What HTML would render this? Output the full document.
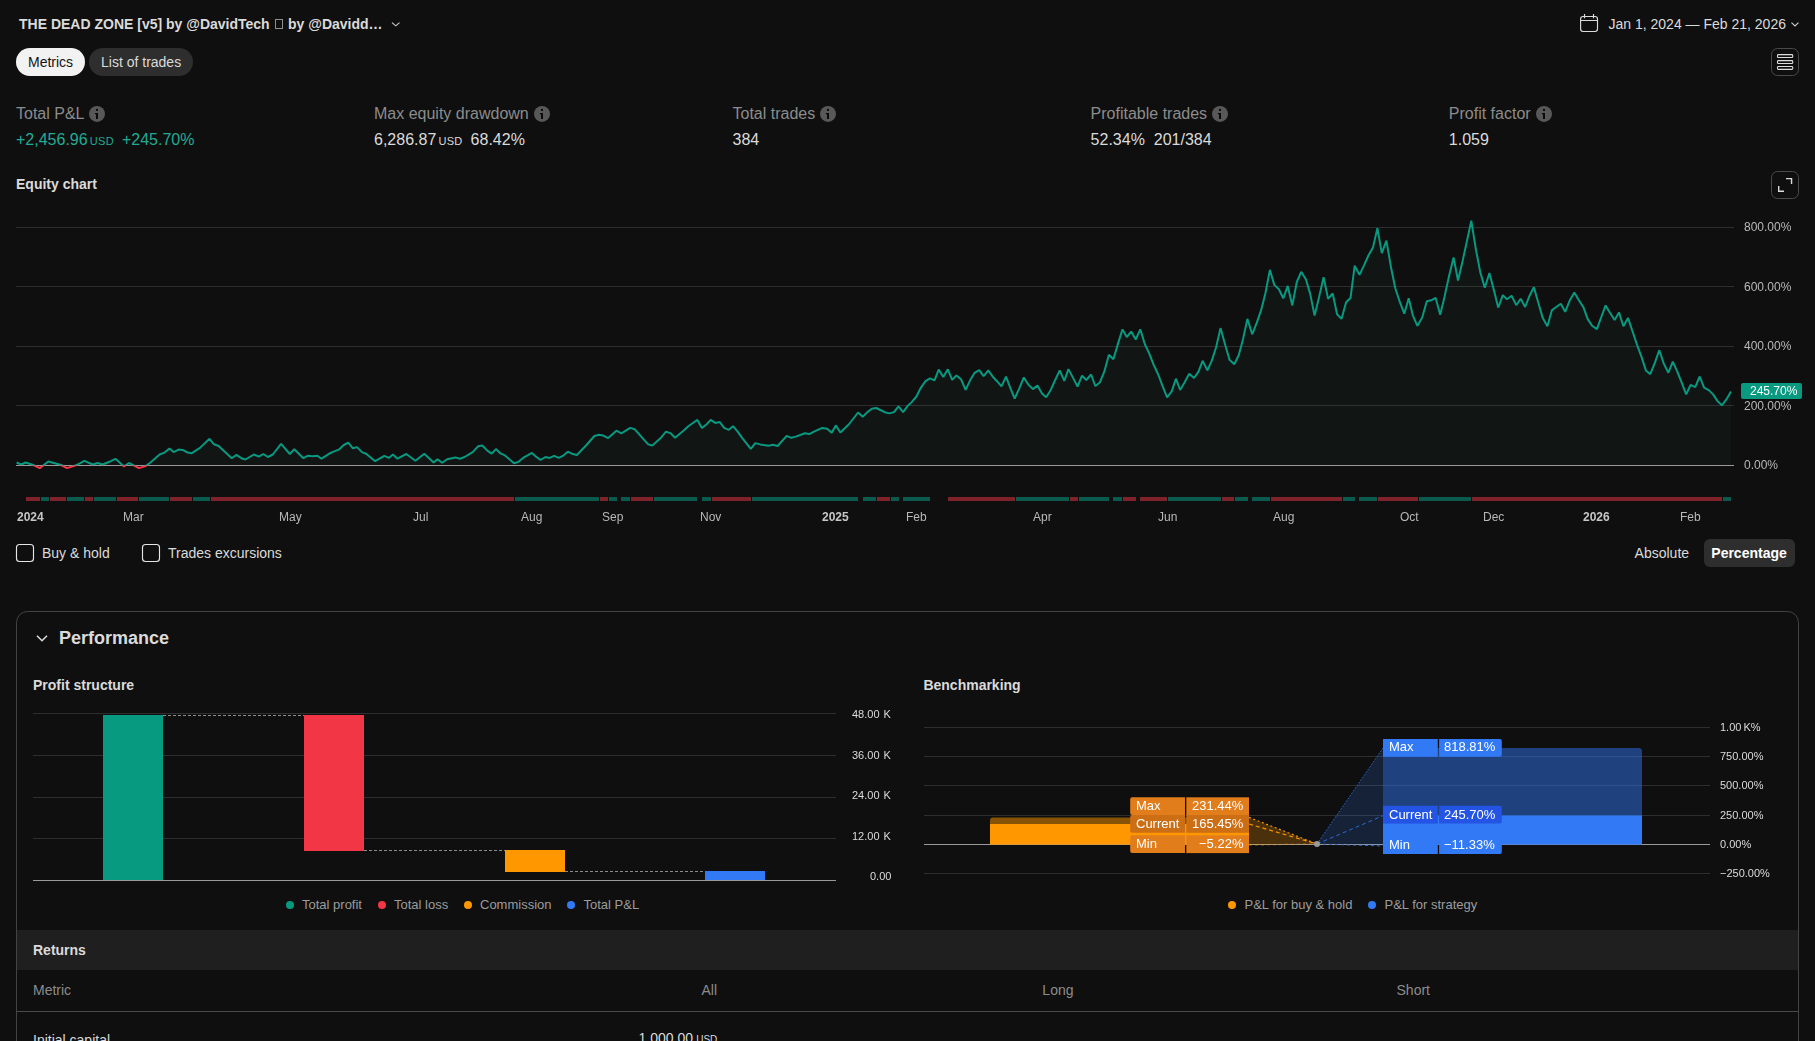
<!DOCTYPE html><html><head><meta charset="utf-8"><title>Strategy report</title>
<style>
html,body{margin:0;padding:0;background:#0f0f0f;}
body{width:1815px;height:1041px;overflow:hidden;position:relative;font-family:"Liberation Sans",sans-serif;color:#dbdbdb;}
.t{position:absolute;white-space:nowrap;}
.abs{position:absolute;}
.g{will-change:transform;}
svg{position:absolute;left:0;top:0;}
.usd{font-size:11px;margin-left:2.2px;letter-spacing:0.3px;margin-right:-0.9px;}
</style></head><body>
<svg width="1815" height="1041" viewBox="0 0 1815 1041">
<defs><clipPath id="up"><rect x="0" y="200" width="1815" height="265.5"/></clipPath><clipPath id="dn"><rect x="0" y="465.5" width="1815" height="40"/></clipPath></defs>
<line x1="16" x2="1734" y1="227.5" y2="227.5" stroke="#2e2e2e" stroke-width="1"/>
<line x1="16" x2="1734" y1="286.5" y2="286.5" stroke="#2e2e2e" stroke-width="1"/>
<line x1="16" x2="1734" y1="346.5" y2="346.5" stroke="#2e2e2e" stroke-width="1"/>
<line x1="16" x2="1734" y1="405.5" y2="405.5" stroke="#2e2e2e" stroke-width="1"/>
<path d="M16.6,462.5 L21.2,464.5 L25.7,462.5 L34.0,465.3 L39.8,468.1 L48.3,461.5 L61.2,465.0 L67.0,468.1 L74.5,465.8 L79.4,463.6 L84.4,460.8 L92.6,464.5 L97.6,463.0 L102.6,464.5 L110.8,461.2 L115.5,458.8 L124.0,466.4 L129.0,463.0 L139.0,468.1 L145.5,466.1 L150.5,462.5 L159.6,454.5 L164.5,452.6 L169.5,448.4 L173.6,452.1 L178.6,449.6 L182.7,449.9 L187.7,452.6 L191.8,453.2 L200.0,447.9 L209.5,438.8 L214.1,444.3 L218.6,446.0 L231.8,458.2 L236.4,454.9 L241.4,458.2 L245.5,459.5 L253.8,454.5 L258.8,456.7 L263.2,454.0 L267.9,457.0 L272.8,454.5 L281.1,443.8 L289.8,454.0 L294.3,449.3 L303.4,458.2 L308.0,455.7 L312.4,456.2 L317.4,455.7 L321.5,458.7 L330.6,452.9 L339.3,449.3 L343.8,445.0 L348.3,442.6 L352.9,448.3 L357.0,447.1 L362.0,452.1 L366.1,453.7 L375.2,461.2 L384.3,455.9 L388.8,457.9 L392.9,454.5 L397.5,458.7 L406.3,454.0 L415.4,460.8 L424.3,453.7 L433.6,462.5 L437.5,459.2 L442.1,462.8 L447.1,459.2 L455.4,457.4 L460.0,458.7 L464.5,457.0 L472.7,452.1 L478.0,446.3 L482.3,445.5 L487.6,450.9 L491.7,453.7 L495.9,449.1 L500.5,453.4 L505.0,455.4 L514.0,463.3 L518.2,462.0 L523.1,457.9 L531.9,452.9 L536.4,457.0 L540.5,459.8 L545.5,457.0 L549.6,457.9 L554.2,455.9 L558.7,457.9 L562.8,455.9 L567.8,451.7 L571.9,453.7 L576.9,455.0 L586.0,445.5 L594.4,436.0 L599.1,434.8 L603.2,435.6 L608.2,438.1 L616.4,430.7 L621.4,433.3 L630.2,427.9 L634.6,429.2 L643.7,439.4 L648.2,444.4 L652.3,445.5 L660.2,438.6 L666.0,431.7 L670.5,433.1 L675.1,437.8 L683.4,430.8 L688.3,426.2 L697.4,419.9 L701.9,427.9 L706.5,424.5 L710.7,419.9 L715.3,422.9 L719.8,422.1 L724.2,427.9 L728.8,429.8 L733.0,426.2 L737.1,430.8 L742.1,437.8 L750.8,448.8 L755.3,443.1 L760.2,444.4 L768.5,445.7 L773.1,444.7 L777.6,446.0 L786.7,435.8 L791.3,437.8 L795.8,436.6 L804.9,433.3 L809.3,434.1 L814.0,431.7 L822.2,427.9 L827.2,428.7 L831.7,432.8 L835.8,425.4 L840.4,432.5 L848.7,424.5 L858.1,412.5 L862.7,416.8 L867.4,412.1 L871.8,408.8 L876.3,408.0 L880.4,410.0 L884.8,412.2 L889.4,413.4 L894.0,412.1 L898.5,406.3 L903.1,412.1 L907.3,406.3 L911.7,402.1 L916.4,396.5 L920.8,387.8 L925.5,381.2 L929.9,378.3 L934.5,380.3 L938.7,369.6 L943.3,377.0 L947.8,369.3 L952.2,379.8 L956.5,375.4 L961.0,379.2 L965.6,389.9 L970.1,380.3 L974.5,372.9 L979.2,370.1 L983.6,376.2 L988.3,370.4 L992.4,376.2 L997.0,381.2 L1001.5,386.4 L1006.0,376.7 L1010.6,388.6 L1014.7,398.5 L1019.3,388.3 L1023.8,377.5 L1028.3,384.5 L1032.9,389.1 L1037.4,385.6 L1042.0,393.6 L1046.1,397.2 L1050.6,390.2 L1055.2,380.0 L1059.7,370.4 L1064.3,380.8 L1068.4,369.1 L1073.1,377.9 L1077.5,386.6 L1082.0,375.7 L1086.3,380.0 L1091.1,374.5 L1095.4,386.1 L1099.8,382.5 L1104.3,371.7 L1108.9,354.7 L1113.4,359.2 L1118.0,343.6 L1122.5,329.4 L1126.8,337.0 L1131.2,331.6 L1135.7,339.5 L1140.3,329.4 L1144.8,344.0 L1149.4,353.9 L1153.6,364.6 L1158.2,374.5 L1162.6,386.1 L1167.1,397.4 L1171.7,391.4 L1175.9,378.7 L1180.2,390.0 L1184.8,381.9 L1189.2,373.8 L1194.0,378.0 L1198.4,371.9 L1202.6,360.8 L1207.4,370.4 L1211.9,360.4 L1216.1,347.3 L1220.5,328.1 L1225.1,344.4 L1229.5,359.8 L1234.3,364.2 L1238.8,355.0 L1243.0,339.2 L1247.4,318.9 L1252.2,334.3 L1256.8,322.7 L1261.2,309.9 L1265.4,293.2 L1269.9,269.9 L1274.3,284.9 L1278.9,289.3 L1283.3,298.3 L1287.7,285.9 L1292.3,305.4 L1296.8,282.0 L1301.2,271.8 L1306.0,279.5 L1310.2,293.9 L1314.6,315.6 L1319.2,296.4 L1323.6,277.2 L1328.1,298.9 L1332.7,293.5 L1337.1,314.3 L1341.5,318.9 L1346.1,302.2 L1350.5,298.0 L1354.7,265.7 L1359.5,274.9 L1364.0,265.3 L1368.4,255.5 L1373.0,247.4 L1377.4,228.2 L1381.8,253.2 L1386.4,240.7 L1390.9,266.7 L1395.3,288.2 L1399.9,302.2 L1404.3,313.7 L1408.7,298.3 L1412.9,315.6 L1417.4,325.8 L1422.2,317.5 L1426.8,301.2 L1431.2,300.3 L1435.6,297.8 L1440.2,314.7 L1444.6,296.4 L1449.0,276.3 L1453.6,257.4 L1458.0,280.5 L1462.5,261.4 L1467.0,240.7 L1471.3,220.6 L1475.9,249.4 L1480.3,272.4 L1484.8,287.8 L1489.4,273.0 L1493.8,289.7 L1498.2,307.6 L1502.8,295.1 L1507.0,299.3 L1511.6,295.8 L1516.3,305.1 L1520.7,298.7 L1525.1,307.0 L1529.5,295.8 L1533.9,287.2 L1538.3,302.8 L1542.8,318.1 L1547.4,326.2 L1551.8,310.4 L1556.2,307.0 L1560.8,303.7 L1565.2,311.8 L1569.6,300.8 L1574.3,292.6 L1578.9,300.3 L1583.5,307.4 L1587.7,319.1 L1592.1,325.8 L1596.9,329.1 L1601.1,317.5 L1605.6,305.4 L1610.0,312.7 L1614.6,320.0 L1619.0,312.4 L1623.4,326.2 L1628.0,317.9 L1632.4,331.0 L1636.9,344.4 L1641.5,356.9 L1645.9,370.4 L1650.3,374.2 L1654.9,362.7 L1659.3,350.2 L1663.8,363.6 L1668.4,372.7 L1672.8,361.7 L1677.2,371.3 L1681.8,382.8 L1686.2,394.4 L1690.6,384.8 L1695.2,387.1 L1699.7,376.5 L1704.1,387.6 L1708.7,390.1 L1713.1,394.4 L1717.5,401.1 L1721.9,405.3 L1726.5,399.2 L1731.0,391.6 L1731.0,465.5 L16.6,465.5 Z" fill="rgba(60,180,160,0.045)" clip-path="url(#up)"/>
<path d="M16.6,462.5 L21.2,464.5 L25.7,462.5 L34.0,465.3 L39.8,468.1 L48.3,461.5 L61.2,465.0 L67.0,468.1 L74.5,465.8 L79.4,463.6 L84.4,460.8 L92.6,464.5 L97.6,463.0 L102.6,464.5 L110.8,461.2 L115.5,458.8 L124.0,466.4 L129.0,463.0 L139.0,468.1 L145.5,466.1 L150.5,462.5 L159.6,454.5 L164.5,452.6 L169.5,448.4 L173.6,452.1 L178.6,449.6 L182.7,449.9 L187.7,452.6 L191.8,453.2 L200.0,447.9 L209.5,438.8 L214.1,444.3 L218.6,446.0 L231.8,458.2 L236.4,454.9 L241.4,458.2 L245.5,459.5 L253.8,454.5 L258.8,456.7 L263.2,454.0 L267.9,457.0 L272.8,454.5 L281.1,443.8 L289.8,454.0 L294.3,449.3 L303.4,458.2 L308.0,455.7 L312.4,456.2 L317.4,455.7 L321.5,458.7 L330.6,452.9 L339.3,449.3 L343.8,445.0 L348.3,442.6 L352.9,448.3 L357.0,447.1 L362.0,452.1 L366.1,453.7 L375.2,461.2 L384.3,455.9 L388.8,457.9 L392.9,454.5 L397.5,458.7 L406.3,454.0 L415.4,460.8 L424.3,453.7 L433.6,462.5 L437.5,459.2 L442.1,462.8 L447.1,459.2 L455.4,457.4 L460.0,458.7 L464.5,457.0 L472.7,452.1 L478.0,446.3 L482.3,445.5 L487.6,450.9 L491.7,453.7 L495.9,449.1 L500.5,453.4 L505.0,455.4 L514.0,463.3 L518.2,462.0 L523.1,457.9 L531.9,452.9 L536.4,457.0 L540.5,459.8 L545.5,457.0 L549.6,457.9 L554.2,455.9 L558.7,457.9 L562.8,455.9 L567.8,451.7 L571.9,453.7 L576.9,455.0 L586.0,445.5 L594.4,436.0 L599.1,434.8 L603.2,435.6 L608.2,438.1 L616.4,430.7 L621.4,433.3 L630.2,427.9 L634.6,429.2 L643.7,439.4 L648.2,444.4 L652.3,445.5 L660.2,438.6 L666.0,431.7 L670.5,433.1 L675.1,437.8 L683.4,430.8 L688.3,426.2 L697.4,419.9 L701.9,427.9 L706.5,424.5 L710.7,419.9 L715.3,422.9 L719.8,422.1 L724.2,427.9 L728.8,429.8 L733.0,426.2 L737.1,430.8 L742.1,437.8 L750.8,448.8 L755.3,443.1 L760.2,444.4 L768.5,445.7 L773.1,444.7 L777.6,446.0 L786.7,435.8 L791.3,437.8 L795.8,436.6 L804.9,433.3 L809.3,434.1 L814.0,431.7 L822.2,427.9 L827.2,428.7 L831.7,432.8 L835.8,425.4 L840.4,432.5 L848.7,424.5 L858.1,412.5 L862.7,416.8 L867.4,412.1 L871.8,408.8 L876.3,408.0 L880.4,410.0 L884.8,412.2 L889.4,413.4 L894.0,412.1 L898.5,406.3 L903.1,412.1 L907.3,406.3 L911.7,402.1 L916.4,396.5 L920.8,387.8 L925.5,381.2 L929.9,378.3 L934.5,380.3 L938.7,369.6 L943.3,377.0 L947.8,369.3 L952.2,379.8 L956.5,375.4 L961.0,379.2 L965.6,389.9 L970.1,380.3 L974.5,372.9 L979.2,370.1 L983.6,376.2 L988.3,370.4 L992.4,376.2 L997.0,381.2 L1001.5,386.4 L1006.0,376.7 L1010.6,388.6 L1014.7,398.5 L1019.3,388.3 L1023.8,377.5 L1028.3,384.5 L1032.9,389.1 L1037.4,385.6 L1042.0,393.6 L1046.1,397.2 L1050.6,390.2 L1055.2,380.0 L1059.7,370.4 L1064.3,380.8 L1068.4,369.1 L1073.1,377.9 L1077.5,386.6 L1082.0,375.7 L1086.3,380.0 L1091.1,374.5 L1095.4,386.1 L1099.8,382.5 L1104.3,371.7 L1108.9,354.7 L1113.4,359.2 L1118.0,343.6 L1122.5,329.4 L1126.8,337.0 L1131.2,331.6 L1135.7,339.5 L1140.3,329.4 L1144.8,344.0 L1149.4,353.9 L1153.6,364.6 L1158.2,374.5 L1162.6,386.1 L1167.1,397.4 L1171.7,391.4 L1175.9,378.7 L1180.2,390.0 L1184.8,381.9 L1189.2,373.8 L1194.0,378.0 L1198.4,371.9 L1202.6,360.8 L1207.4,370.4 L1211.9,360.4 L1216.1,347.3 L1220.5,328.1 L1225.1,344.4 L1229.5,359.8 L1234.3,364.2 L1238.8,355.0 L1243.0,339.2 L1247.4,318.9 L1252.2,334.3 L1256.8,322.7 L1261.2,309.9 L1265.4,293.2 L1269.9,269.9 L1274.3,284.9 L1278.9,289.3 L1283.3,298.3 L1287.7,285.9 L1292.3,305.4 L1296.8,282.0 L1301.2,271.8 L1306.0,279.5 L1310.2,293.9 L1314.6,315.6 L1319.2,296.4 L1323.6,277.2 L1328.1,298.9 L1332.7,293.5 L1337.1,314.3 L1341.5,318.9 L1346.1,302.2 L1350.5,298.0 L1354.7,265.7 L1359.5,274.9 L1364.0,265.3 L1368.4,255.5 L1373.0,247.4 L1377.4,228.2 L1381.8,253.2 L1386.4,240.7 L1390.9,266.7 L1395.3,288.2 L1399.9,302.2 L1404.3,313.7 L1408.7,298.3 L1412.9,315.6 L1417.4,325.8 L1422.2,317.5 L1426.8,301.2 L1431.2,300.3 L1435.6,297.8 L1440.2,314.7 L1444.6,296.4 L1449.0,276.3 L1453.6,257.4 L1458.0,280.5 L1462.5,261.4 L1467.0,240.7 L1471.3,220.6 L1475.9,249.4 L1480.3,272.4 L1484.8,287.8 L1489.4,273.0 L1493.8,289.7 L1498.2,307.6 L1502.8,295.1 L1507.0,299.3 L1511.6,295.8 L1516.3,305.1 L1520.7,298.7 L1525.1,307.0 L1529.5,295.8 L1533.9,287.2 L1538.3,302.8 L1542.8,318.1 L1547.4,326.2 L1551.8,310.4 L1556.2,307.0 L1560.8,303.7 L1565.2,311.8 L1569.6,300.8 L1574.3,292.6 L1578.9,300.3 L1583.5,307.4 L1587.7,319.1 L1592.1,325.8 L1596.9,329.1 L1601.1,317.5 L1605.6,305.4 L1610.0,312.7 L1614.6,320.0 L1619.0,312.4 L1623.4,326.2 L1628.0,317.9 L1632.4,331.0 L1636.9,344.4 L1641.5,356.9 L1645.9,370.4 L1650.3,374.2 L1654.9,362.7 L1659.3,350.2 L1663.8,363.6 L1668.4,372.7 L1672.8,361.7 L1677.2,371.3 L1681.8,382.8 L1686.2,394.4 L1690.6,384.8 L1695.2,387.1 L1699.7,376.5 L1704.1,387.6 L1708.7,390.1 L1713.1,394.4 L1717.5,401.1 L1721.9,405.3 L1726.5,399.2 L1731.0,391.6 L1731.0,465.5 L16.6,465.5 Z" fill="rgba(242,54,69,0.055)" clip-path="url(#dn)"/>
<line x1="16" x2="1734" y1="465.5" y2="465.5" stroke="#9a9a9a" stroke-width="1"/>
<path d="M16.6,462.5 L21.2,464.5 L25.7,462.5 L34.0,465.3 L39.8,468.1 L48.3,461.5 L61.2,465.0 L67.0,468.1 L74.5,465.8 L79.4,463.6 L84.4,460.8 L92.6,464.5 L97.6,463.0 L102.6,464.5 L110.8,461.2 L115.5,458.8 L124.0,466.4 L129.0,463.0 L139.0,468.1 L145.5,466.1 L150.5,462.5 L159.6,454.5 L164.5,452.6 L169.5,448.4 L173.6,452.1 L178.6,449.6 L182.7,449.9 L187.7,452.6 L191.8,453.2 L200.0,447.9 L209.5,438.8 L214.1,444.3 L218.6,446.0 L231.8,458.2 L236.4,454.9 L241.4,458.2 L245.5,459.5 L253.8,454.5 L258.8,456.7 L263.2,454.0 L267.9,457.0 L272.8,454.5 L281.1,443.8 L289.8,454.0 L294.3,449.3 L303.4,458.2 L308.0,455.7 L312.4,456.2 L317.4,455.7 L321.5,458.7 L330.6,452.9 L339.3,449.3 L343.8,445.0 L348.3,442.6 L352.9,448.3 L357.0,447.1 L362.0,452.1 L366.1,453.7 L375.2,461.2 L384.3,455.9 L388.8,457.9 L392.9,454.5 L397.5,458.7 L406.3,454.0 L415.4,460.8 L424.3,453.7 L433.6,462.5 L437.5,459.2 L442.1,462.8 L447.1,459.2 L455.4,457.4 L460.0,458.7 L464.5,457.0 L472.7,452.1 L478.0,446.3 L482.3,445.5 L487.6,450.9 L491.7,453.7 L495.9,449.1 L500.5,453.4 L505.0,455.4 L514.0,463.3 L518.2,462.0 L523.1,457.9 L531.9,452.9 L536.4,457.0 L540.5,459.8 L545.5,457.0 L549.6,457.9 L554.2,455.9 L558.7,457.9 L562.8,455.9 L567.8,451.7 L571.9,453.7 L576.9,455.0 L586.0,445.5 L594.4,436.0 L599.1,434.8 L603.2,435.6 L608.2,438.1 L616.4,430.7 L621.4,433.3 L630.2,427.9 L634.6,429.2 L643.7,439.4 L648.2,444.4 L652.3,445.5 L660.2,438.6 L666.0,431.7 L670.5,433.1 L675.1,437.8 L683.4,430.8 L688.3,426.2 L697.4,419.9 L701.9,427.9 L706.5,424.5 L710.7,419.9 L715.3,422.9 L719.8,422.1 L724.2,427.9 L728.8,429.8 L733.0,426.2 L737.1,430.8 L742.1,437.8 L750.8,448.8 L755.3,443.1 L760.2,444.4 L768.5,445.7 L773.1,444.7 L777.6,446.0 L786.7,435.8 L791.3,437.8 L795.8,436.6 L804.9,433.3 L809.3,434.1 L814.0,431.7 L822.2,427.9 L827.2,428.7 L831.7,432.8 L835.8,425.4 L840.4,432.5 L848.7,424.5 L858.1,412.5 L862.7,416.8 L867.4,412.1 L871.8,408.8 L876.3,408.0 L880.4,410.0 L884.8,412.2 L889.4,413.4 L894.0,412.1 L898.5,406.3 L903.1,412.1 L907.3,406.3 L911.7,402.1 L916.4,396.5 L920.8,387.8 L925.5,381.2 L929.9,378.3 L934.5,380.3 L938.7,369.6 L943.3,377.0 L947.8,369.3 L952.2,379.8 L956.5,375.4 L961.0,379.2 L965.6,389.9 L970.1,380.3 L974.5,372.9 L979.2,370.1 L983.6,376.2 L988.3,370.4 L992.4,376.2 L997.0,381.2 L1001.5,386.4 L1006.0,376.7 L1010.6,388.6 L1014.7,398.5 L1019.3,388.3 L1023.8,377.5 L1028.3,384.5 L1032.9,389.1 L1037.4,385.6 L1042.0,393.6 L1046.1,397.2 L1050.6,390.2 L1055.2,380.0 L1059.7,370.4 L1064.3,380.8 L1068.4,369.1 L1073.1,377.9 L1077.5,386.6 L1082.0,375.7 L1086.3,380.0 L1091.1,374.5 L1095.4,386.1 L1099.8,382.5 L1104.3,371.7 L1108.9,354.7 L1113.4,359.2 L1118.0,343.6 L1122.5,329.4 L1126.8,337.0 L1131.2,331.6 L1135.7,339.5 L1140.3,329.4 L1144.8,344.0 L1149.4,353.9 L1153.6,364.6 L1158.2,374.5 L1162.6,386.1 L1167.1,397.4 L1171.7,391.4 L1175.9,378.7 L1180.2,390.0 L1184.8,381.9 L1189.2,373.8 L1194.0,378.0 L1198.4,371.9 L1202.6,360.8 L1207.4,370.4 L1211.9,360.4 L1216.1,347.3 L1220.5,328.1 L1225.1,344.4 L1229.5,359.8 L1234.3,364.2 L1238.8,355.0 L1243.0,339.2 L1247.4,318.9 L1252.2,334.3 L1256.8,322.7 L1261.2,309.9 L1265.4,293.2 L1269.9,269.9 L1274.3,284.9 L1278.9,289.3 L1283.3,298.3 L1287.7,285.9 L1292.3,305.4 L1296.8,282.0 L1301.2,271.8 L1306.0,279.5 L1310.2,293.9 L1314.6,315.6 L1319.2,296.4 L1323.6,277.2 L1328.1,298.9 L1332.7,293.5 L1337.1,314.3 L1341.5,318.9 L1346.1,302.2 L1350.5,298.0 L1354.7,265.7 L1359.5,274.9 L1364.0,265.3 L1368.4,255.5 L1373.0,247.4 L1377.4,228.2 L1381.8,253.2 L1386.4,240.7 L1390.9,266.7 L1395.3,288.2 L1399.9,302.2 L1404.3,313.7 L1408.7,298.3 L1412.9,315.6 L1417.4,325.8 L1422.2,317.5 L1426.8,301.2 L1431.2,300.3 L1435.6,297.8 L1440.2,314.7 L1444.6,296.4 L1449.0,276.3 L1453.6,257.4 L1458.0,280.5 L1462.5,261.4 L1467.0,240.7 L1471.3,220.6 L1475.9,249.4 L1480.3,272.4 L1484.8,287.8 L1489.4,273.0 L1493.8,289.7 L1498.2,307.6 L1502.8,295.1 L1507.0,299.3 L1511.6,295.8 L1516.3,305.1 L1520.7,298.7 L1525.1,307.0 L1529.5,295.8 L1533.9,287.2 L1538.3,302.8 L1542.8,318.1 L1547.4,326.2 L1551.8,310.4 L1556.2,307.0 L1560.8,303.7 L1565.2,311.8 L1569.6,300.8 L1574.3,292.6 L1578.9,300.3 L1583.5,307.4 L1587.7,319.1 L1592.1,325.8 L1596.9,329.1 L1601.1,317.5 L1605.6,305.4 L1610.0,312.7 L1614.6,320.0 L1619.0,312.4 L1623.4,326.2 L1628.0,317.9 L1632.4,331.0 L1636.9,344.4 L1641.5,356.9 L1645.9,370.4 L1650.3,374.2 L1654.9,362.7 L1659.3,350.2 L1663.8,363.6 L1668.4,372.7 L1672.8,361.7 L1677.2,371.3 L1681.8,382.8 L1686.2,394.4 L1690.6,384.8 L1695.2,387.1 L1699.7,376.5 L1704.1,387.6 L1708.7,390.1 L1713.1,394.4 L1717.5,401.1 L1721.9,405.3 L1726.5,399.2 L1731.0,391.6" fill="none" stroke="#089981" stroke-width="2" stroke-linejoin="bevel" stroke-linecap="butt" clip-path="url(#up)"/>
<path d="M16.6,462.5 L21.2,464.5 L25.7,462.5 L34.0,465.3 L39.8,468.1 L48.3,461.5 L61.2,465.0 L67.0,468.1 L74.5,465.8 L79.4,463.6 L84.4,460.8 L92.6,464.5 L97.6,463.0 L102.6,464.5 L110.8,461.2 L115.5,458.8 L124.0,466.4 L129.0,463.0 L139.0,468.1 L145.5,466.1 L150.5,462.5 L159.6,454.5 L164.5,452.6 L169.5,448.4 L173.6,452.1 L178.6,449.6 L182.7,449.9 L187.7,452.6 L191.8,453.2 L200.0,447.9 L209.5,438.8 L214.1,444.3 L218.6,446.0 L231.8,458.2 L236.4,454.9 L241.4,458.2 L245.5,459.5 L253.8,454.5 L258.8,456.7 L263.2,454.0 L267.9,457.0 L272.8,454.5 L281.1,443.8 L289.8,454.0 L294.3,449.3 L303.4,458.2 L308.0,455.7 L312.4,456.2 L317.4,455.7 L321.5,458.7 L330.6,452.9 L339.3,449.3 L343.8,445.0 L348.3,442.6 L352.9,448.3 L357.0,447.1 L362.0,452.1 L366.1,453.7 L375.2,461.2 L384.3,455.9 L388.8,457.9 L392.9,454.5 L397.5,458.7 L406.3,454.0 L415.4,460.8 L424.3,453.7 L433.6,462.5 L437.5,459.2 L442.1,462.8 L447.1,459.2 L455.4,457.4 L460.0,458.7 L464.5,457.0 L472.7,452.1 L478.0,446.3 L482.3,445.5 L487.6,450.9 L491.7,453.7 L495.9,449.1 L500.5,453.4 L505.0,455.4 L514.0,463.3 L518.2,462.0 L523.1,457.9 L531.9,452.9 L536.4,457.0 L540.5,459.8 L545.5,457.0 L549.6,457.9 L554.2,455.9 L558.7,457.9 L562.8,455.9 L567.8,451.7 L571.9,453.7 L576.9,455.0 L586.0,445.5 L594.4,436.0 L599.1,434.8 L603.2,435.6 L608.2,438.1 L616.4,430.7 L621.4,433.3 L630.2,427.9 L634.6,429.2 L643.7,439.4 L648.2,444.4 L652.3,445.5 L660.2,438.6 L666.0,431.7 L670.5,433.1 L675.1,437.8 L683.4,430.8 L688.3,426.2 L697.4,419.9 L701.9,427.9 L706.5,424.5 L710.7,419.9 L715.3,422.9 L719.8,422.1 L724.2,427.9 L728.8,429.8 L733.0,426.2 L737.1,430.8 L742.1,437.8 L750.8,448.8 L755.3,443.1 L760.2,444.4 L768.5,445.7 L773.1,444.7 L777.6,446.0 L786.7,435.8 L791.3,437.8 L795.8,436.6 L804.9,433.3 L809.3,434.1 L814.0,431.7 L822.2,427.9 L827.2,428.7 L831.7,432.8 L835.8,425.4 L840.4,432.5 L848.7,424.5 L858.1,412.5 L862.7,416.8 L867.4,412.1 L871.8,408.8 L876.3,408.0 L880.4,410.0 L884.8,412.2 L889.4,413.4 L894.0,412.1 L898.5,406.3 L903.1,412.1 L907.3,406.3 L911.7,402.1 L916.4,396.5 L920.8,387.8 L925.5,381.2 L929.9,378.3 L934.5,380.3 L938.7,369.6 L943.3,377.0 L947.8,369.3 L952.2,379.8 L956.5,375.4 L961.0,379.2 L965.6,389.9 L970.1,380.3 L974.5,372.9 L979.2,370.1 L983.6,376.2 L988.3,370.4 L992.4,376.2 L997.0,381.2 L1001.5,386.4 L1006.0,376.7 L1010.6,388.6 L1014.7,398.5 L1019.3,388.3 L1023.8,377.5 L1028.3,384.5 L1032.9,389.1 L1037.4,385.6 L1042.0,393.6 L1046.1,397.2 L1050.6,390.2 L1055.2,380.0 L1059.7,370.4 L1064.3,380.8 L1068.4,369.1 L1073.1,377.9 L1077.5,386.6 L1082.0,375.7 L1086.3,380.0 L1091.1,374.5 L1095.4,386.1 L1099.8,382.5 L1104.3,371.7 L1108.9,354.7 L1113.4,359.2 L1118.0,343.6 L1122.5,329.4 L1126.8,337.0 L1131.2,331.6 L1135.7,339.5 L1140.3,329.4 L1144.8,344.0 L1149.4,353.9 L1153.6,364.6 L1158.2,374.5 L1162.6,386.1 L1167.1,397.4 L1171.7,391.4 L1175.9,378.7 L1180.2,390.0 L1184.8,381.9 L1189.2,373.8 L1194.0,378.0 L1198.4,371.9 L1202.6,360.8 L1207.4,370.4 L1211.9,360.4 L1216.1,347.3 L1220.5,328.1 L1225.1,344.4 L1229.5,359.8 L1234.3,364.2 L1238.8,355.0 L1243.0,339.2 L1247.4,318.9 L1252.2,334.3 L1256.8,322.7 L1261.2,309.9 L1265.4,293.2 L1269.9,269.9 L1274.3,284.9 L1278.9,289.3 L1283.3,298.3 L1287.7,285.9 L1292.3,305.4 L1296.8,282.0 L1301.2,271.8 L1306.0,279.5 L1310.2,293.9 L1314.6,315.6 L1319.2,296.4 L1323.6,277.2 L1328.1,298.9 L1332.7,293.5 L1337.1,314.3 L1341.5,318.9 L1346.1,302.2 L1350.5,298.0 L1354.7,265.7 L1359.5,274.9 L1364.0,265.3 L1368.4,255.5 L1373.0,247.4 L1377.4,228.2 L1381.8,253.2 L1386.4,240.7 L1390.9,266.7 L1395.3,288.2 L1399.9,302.2 L1404.3,313.7 L1408.7,298.3 L1412.9,315.6 L1417.4,325.8 L1422.2,317.5 L1426.8,301.2 L1431.2,300.3 L1435.6,297.8 L1440.2,314.7 L1444.6,296.4 L1449.0,276.3 L1453.6,257.4 L1458.0,280.5 L1462.5,261.4 L1467.0,240.7 L1471.3,220.6 L1475.9,249.4 L1480.3,272.4 L1484.8,287.8 L1489.4,273.0 L1493.8,289.7 L1498.2,307.6 L1502.8,295.1 L1507.0,299.3 L1511.6,295.8 L1516.3,305.1 L1520.7,298.7 L1525.1,307.0 L1529.5,295.8 L1533.9,287.2 L1538.3,302.8 L1542.8,318.1 L1547.4,326.2 L1551.8,310.4 L1556.2,307.0 L1560.8,303.7 L1565.2,311.8 L1569.6,300.8 L1574.3,292.6 L1578.9,300.3 L1583.5,307.4 L1587.7,319.1 L1592.1,325.8 L1596.9,329.1 L1601.1,317.5 L1605.6,305.4 L1610.0,312.7 L1614.6,320.0 L1619.0,312.4 L1623.4,326.2 L1628.0,317.9 L1632.4,331.0 L1636.9,344.4 L1641.5,356.9 L1645.9,370.4 L1650.3,374.2 L1654.9,362.7 L1659.3,350.2 L1663.8,363.6 L1668.4,372.7 L1672.8,361.7 L1677.2,371.3 L1681.8,382.8 L1686.2,394.4 L1690.6,384.8 L1695.2,387.1 L1699.7,376.5 L1704.1,387.6 L1708.7,390.1 L1713.1,394.4 L1717.5,401.1 L1721.9,405.3 L1726.5,399.2 L1731.0,391.6" fill="none" stroke="#f23645" stroke-width="2" stroke-linejoin="bevel" stroke-linecap="butt" clip-path="url(#dn)"/>
<rect x="26" y="497" width="14" height="4" fill="#7f2229"/>
<rect x="41" y="497" width="8" height="4" fill="#0b5a4e"/>
<rect x="50" y="497" width="16" height="4" fill="#7f2229"/>
<rect x="67" y="497" width="17" height="4" fill="#0b5a4e"/>
<rect x="85" y="497" width="8" height="4" fill="#7f2229"/>
<rect x="94" y="497" width="22" height="4" fill="#0b5a4e"/>
<rect x="117" y="497" width="21" height="4" fill="#7f2229"/>
<rect x="139" y="497" width="30" height="4" fill="#0b5a4e"/>
<rect x="170" y="497" width="22" height="4" fill="#7f2229"/>
<rect x="193" y="497" width="17" height="4" fill="#0b5a4e"/>
<rect x="211" y="497" width="303" height="4" fill="#7f2229"/>
<rect x="515" y="497" width="84" height="4" fill="#0b5a4e"/>
<rect x="600" y="497" width="8" height="4" fill="#7f2229"/>
<rect x="609" y="497" width="8" height="4" fill="#0b5a4e"/>
<rect x="621" y="497" width="9" height="4" fill="#0b5a4e"/>
<rect x="631" y="497" width="22" height="4" fill="#7f2229"/>
<rect x="654" y="497" width="43" height="4" fill="#0b5a4e"/>
<rect x="702" y="497" width="9" height="4" fill="#0b5a4e"/>
<rect x="712" y="497" width="39" height="4" fill="#7f2229"/>
<rect x="752" y="497" width="106" height="4" fill="#0b5a4e"/>
<rect x="863" y="497" width="13" height="4" fill="#0b5a4e"/>
<rect x="877" y="497" width="13" height="4" fill="#7f2229"/>
<rect x="891" y="497" width="8" height="4" fill="#0b5a4e"/>
<rect x="903" y="497" width="27" height="4" fill="#0b5a4e"/>
<rect x="948" y="497" width="67" height="4" fill="#7f2229"/>
<rect x="1016" y="497" width="53" height="4" fill="#0b5a4e"/>
<rect x="1070" y="497" width="8" height="4" fill="#7f2229"/>
<rect x="1079" y="497" width="30" height="4" fill="#0b5a4e"/>
<rect x="1113" y="497" width="9" height="4" fill="#0b5a4e"/>
<rect x="1123" y="497" width="13" height="4" fill="#7f2229"/>
<rect x="1140" y="497" width="27" height="4" fill="#7f2229"/>
<rect x="1168" y="497" width="53" height="4" fill="#0b5a4e"/>
<rect x="1222" y="497" width="12" height="4" fill="#7f2229"/>
<rect x="1235" y="497" width="13" height="4" fill="#0b5a4e"/>
<rect x="1252" y="497" width="18" height="4" fill="#0b5a4e"/>
<rect x="1271" y="497" width="71" height="4" fill="#7f2229"/>
<rect x="1343" y="497" width="12" height="4" fill="#0b5a4e"/>
<rect x="1359" y="497" width="18" height="4" fill="#0b5a4e"/>
<rect x="1378" y="497" width="40" height="4" fill="#7f2229"/>
<rect x="1419" y="497" width="52" height="4" fill="#0b5a4e"/>
<rect x="1472" y="497" width="250" height="4" fill="#7f2229"/>
<rect x="1723" y="497" width="8" height="4" fill="#0b5a4e"/>
<rect x="1741" y="383" width="61" height="16" rx="2" fill="#089981"/>
<path d="M392,22.7 L395.75,25.9 L399.5,22.7" fill="none" stroke="#cfcfcf" stroke-width="1.1"/>
<rect x="1580.6" y="16.5" width="16.9" height="15" rx="2.4" fill="none" stroke="#dbdbdb" stroke-width="1.15"/>
<path d="M1580.6,20.5 H1597.5 M1584.5,14 V18.3 M1593.5,14 V18.3" fill="none" stroke="#dbdbdb" stroke-width="1.15"/>
<path d="M1791.5,22.7 L1795,25.9 L1798.5,22.7" fill="none" stroke="#cfcfcf" stroke-width="1.1"/>
<rect x="1771.5" y="48.5" width="27" height="27" rx="6" fill="none" stroke="#4a4a4a" stroke-width="1"/>
<rect x="1777.5" y="54.6" width="15.2" height="2.9" rx="0.8" fill="none" stroke="#dbdbdb" stroke-width="1.1"/>
<rect x="1777.5" y="60.6" width="15.2" height="2.9" rx="0.8" fill="none" stroke="#dbdbdb" stroke-width="1.1"/>
<rect x="1777.5" y="66.5" width="15.2" height="2.9" rx="0.8" fill="none" stroke="#dbdbdb" stroke-width="1.1"/>
<rect x="1771.5" y="171.5" width="27" height="27" rx="6" fill="none" stroke="#4a4a4a" stroke-width="1"/>
<path d="M1786,178.6 H1791.55 V184 M1784,191.3 H1778.7 V186" fill="none" stroke="#dbdbdb" stroke-width="1.4"/>
<circle cx="97" cy="113.9" r="8" fill="#585858"/>
<rect x="96" y="108.9" width="2" height="2" fill="#0a0a0a"/>
<path d="M94.9,113.0 H98 V118.9 H96 V114.2 H94.9 Z" fill="#0a0a0a"/>
<circle cx="542" cy="113.9" r="8" fill="#585858"/>
<rect x="541" y="108.9" width="2" height="2" fill="#0a0a0a"/>
<path d="M539.9,113.0 H543 V118.9 H541 V114.2 H539.9 Z" fill="#0a0a0a"/>
<circle cx="828" cy="113.9" r="8" fill="#585858"/>
<rect x="827" y="108.9" width="2" height="2" fill="#0a0a0a"/>
<path d="M825.9,113.0 H829 V118.9 H827 V114.2 H825.9 Z" fill="#0a0a0a"/>
<circle cx="1220" cy="113.9" r="8" fill="#585858"/>
<rect x="1219" y="108.9" width="2" height="2" fill="#0a0a0a"/>
<path d="M1217.9,113.0 H1221 V118.9 H1219 V114.2 H1217.9 Z" fill="#0a0a0a"/>
<circle cx="1544" cy="113.9" r="8" fill="#585858"/>
<rect x="1543" y="108.9" width="2" height="2" fill="#0a0a0a"/>
<path d="M1541.9,113.0 H1545 V118.9 H1543 V114.2 H1541.9 Z" fill="#0a0a0a"/>
<rect x="16.5" y="544.5" width="17" height="17" rx="3" fill="none" stroke="#e6e6e6" stroke-width="1.15"/>
<rect x="142.5" y="544.5" width="17" height="17" rx="3" fill="none" stroke="#e6e6e6" stroke-width="1.15"/>
<rect x="1704" y="539" width="91" height="28" rx="6" fill="#2e2e2e"/>
<rect x="16.5" y="611.5" width="1782" height="460" rx="11" fill="none" stroke="#434343" stroke-width="1"/>
<path d="M37,635.7 L42,640.7 L47,635.7" fill="none" stroke="#dbdbdb" stroke-width="1.6"/>
<line x1="33" x2="836" y1="713.5" y2="713.5" stroke="#2e2e2e" stroke-width="1"/>
<line x1="33" x2="836" y1="755.5" y2="755.5" stroke="#2e2e2e" stroke-width="1"/>
<line x1="33" x2="836" y1="797.5" y2="797.5" stroke="#2e2e2e" stroke-width="1"/>
<line x1="33" x2="836" y1="838.5" y2="838.5" stroke="#2e2e2e" stroke-width="1"/>
<line x1="33" x2="836" y1="880.5" y2="880.5" stroke="#9a9a9a" stroke-width="1"/>
<rect x="103" y="715" width="60" height="165" fill="#089981"/>
<rect x="304" y="715" width="60" height="136" fill="#f23645"/>
<rect x="505" y="850" width="60" height="22" fill="#ff9800"/>
<rect x="705" y="871" width="60" height="9" fill="#3179f5"/>
<line x1="163" x2="304" y1="715.5" y2="715.5" stroke="#8c8c8c" stroke-width="1" stroke-dasharray="3,2"/>
<line x1="364" x2="505" y1="850.5" y2="850.5" stroke="#8c8c8c" stroke-width="1" stroke-dasharray="3,2"/>
<line x1="565" x2="705" y1="871.5" y2="871.5" stroke="#8c8c8c" stroke-width="1" stroke-dasharray="3,2"/>
<circle cx="290" cy="905" r="4" fill="#089981"/>
<circle cx="382" cy="905" r="4" fill="#f23645"/>
<circle cx="468" cy="905" r="4" fill="#ff9800"/>
<circle cx="571" cy="905" r="4" fill="#3179f5"/>
<circle cx="1232" cy="905" r="4" fill="#ff9800"/>
<circle cx="1372" cy="905" r="4" fill="#3179f5"/>
<line x1="924" x2="1710" y1="727.5" y2="727.5" stroke="#2e2e2e" stroke-width="1"/>
<line x1="924" x2="1710" y1="756.5" y2="756.5" stroke="#2e2e2e" stroke-width="1"/>
<line x1="924" x2="1710" y1="785.5" y2="785.5" stroke="#2e2e2e" stroke-width="1"/>
<line x1="924" x2="1710" y1="815.5" y2="815.5" stroke="#2e2e2e" stroke-width="1"/>
<line x1="924" x2="1710" y1="873.5" y2="873.5" stroke="#2e2e2e" stroke-width="1"/>
<line x1="924" x2="1710" y1="844.5" y2="844.5" stroke="#9a9a9a" stroke-width="1"/>
<path d="M990,844.5 V820.4 a3,3 0 0 1 3,-3 H1249 V844.5 Z" fill="rgba(255,152,0,0.5)"/>
<rect x="990" y="824" width="259" height="20.5" fill="#ff9800"/>
<path d="M1249,817.4 L1317,844 L1249,845 Z" fill="rgba(255,152,0,0.25)"/>
<line x1="1249" y1="817.4" x2="1317" y2="844" stroke="#f59300" stroke-opacity="1" stroke-width="1.2" stroke-dasharray="2,2.6"/>
<line x1="1249" y1="824" x2="1317" y2="844" stroke="#f59300" stroke-opacity="1" stroke-width="1.2" stroke-dasharray="4,3"/>
<line x1="1249" y1="845" x2="1317" y2="844" stroke="#f59300" stroke-opacity="0.55" stroke-width="1.2" stroke-dasharray="3,3"/>
<path d="M1317,844 L1383,748 V846 Z" fill="rgba(49,121,245,0.18)"/>
<line x1="1317" y1="844" x2="1383" y2="748" stroke="#2f6fe0" stroke-width="0.9" stroke-dasharray="1.6,1.6"/>
<line x1="1317" y1="844" x2="1383" y2="815.7" stroke="#2f6fe0" stroke-width="0.9" stroke-dasharray="4,3"/>
<line x1="1317" y1="844" x2="1383" y2="846" stroke="#2f6fe0" stroke-width="0.9" stroke-dasharray="3,3"/>
<path d="M1383,844.5 V748 H1638.5 a3.5,3.5 0 0 1 3.5,3.5 V844.5 Z" fill="rgba(49,121,245,0.49)"/>
<rect x="1383" y="815.5" width="259" height="29" fill="#3179f5"/>
<circle cx="1317" cy="844" r="3" fill="#9a9a9a"/>
<path d="M1132.2,797.3 H1185.0 V815.0999999999999 H1132.2 a2,2 0 0 1 -2,-2 V799.3 a2,2 0 0 1 2,-2 Z" fill="#e27d1b"/>
<rect x="1186.3" y="797.3" width="62.700000000000045" height="17.8" fill="#e27d1b"/>
<path d="M1132.2,815 H1185.0 V832.8 H1132.2 a2,2 0 0 1 -2,-2 V817 a2,2 0 0 1 2,-2 Z" fill="#cc6e14"/>
<rect x="1186.3" y="815" width="62.700000000000045" height="17.8" fill="#cc6e14"/>
<path d="M1132.2,835.3 H1185.0 V853.0999999999999 H1132.2 a2,2 0 0 1 -2,-2 V837.3 a2,2 0 0 1 2,-2 Z" fill="#e27d1b"/>
<rect x="1186.3" y="835.3" width="62.700000000000045" height="17.8" fill="#e27d1b"/>
<rect x="1383" y="739" width="54.799999999999955" height="17.8" fill="#3179f5"/>
<path d="M1439.1,739 H1499.8 a2,2 0 0 1 2,2 V754.8 a2,2 0 0 1 -2,2 H1439.1 Z" fill="#3179f5"/>
<rect x="1383" y="805.8" width="54.799999999999955" height="17.8" fill="#2454e4"/>
<path d="M1439.1,805.8 H1499.8 a2,2 0 0 1 2,2 V821.5999999999999 a2,2 0 0 1 -2,2 H1439.1 Z" fill="#2454e4"/>
<rect x="1383" y="836.2" width="54.799999999999955" height="17.8" fill="#3179f5"/>
<path d="M1439.1,836.2 H1499.8 a2,2 0 0 1 2,2 V852.0 a2,2 0 0 1 -2,2 H1439.1 Z" fill="#3179f5"/>
<rect x="17" y="930" width="1781" height="40" fill="#1f1f1f"/>
<line x1="17" x2="1798" y1="1011.5" y2="1011.5" stroke="#4a4a4a" stroke-width="1"/>
</svg>
<div class="t " style="left:19px;top:16px;font-size:14px;line-height:17px;color:#dbdbdb;font-weight:700;">THE DEAD ZONE [v5] by @DavidTech <span style="display:inline-block;width:6.3px;height:8.3px;border:1px solid #8f8f8f;margin:0 1.3px 0 1px;vertical-align:0px"></span> by @Davidd…</div>
<div class="t " style="left:1608.5px;top:16px;font-size:14px;line-height:17px;color:#dbdbdb;font-weight:400;">Jan 1, 2024 — Feb 21, 2026</div>
<div class="abs" style="left:16px;top:48px;width:69px;height:28px;border-radius:14px;background:#f2f2f2;"></div>
<div class="abs" style="left:89px;top:48px;width:104px;height:28px;border-radius:14px;background:#2e2e2e;"></div>
<div class="t " style="left:28px;top:54px;font-size:14px;line-height:17px;color:#131313;font-weight:400;">Metrics</div>
<div class="t " style="left:101px;top:54px;font-size:14px;line-height:17px;color:#dbdbdb;font-weight:400;">List of trades</div>
<div class="t " style="left:16px;top:104px;font-size:16px;line-height:19px;color:#8c8c8c;font-weight:400;">Total P&amp;L</div>
<div class="t " style="left:374px;top:104px;font-size:16px;line-height:19px;color:#8c8c8c;font-weight:400;">Max equity drawdown</div>
<div class="t " style="left:732.5px;top:104px;font-size:16px;line-height:19px;color:#8c8c8c;font-weight:400;">Total trades</div>
<div class="t " style="left:1090.6px;top:104px;font-size:16px;line-height:19px;color:#8c8c8c;font-weight:400;">Profitable trades</div>
<div class="t " style="left:1448.8px;top:104px;font-size:16px;line-height:19px;color:#8c8c8c;font-weight:400;">Profit factor</div>
<div class="t " style="left:16px;top:130px;font-size:16px;line-height:19px;color:#22ab94;font-weight:400;">+2,456.96<span class="usd">USD</span>&nbsp;&nbsp;+245.70%</div>
<div class="t " style="left:374px;top:130px;font-size:16px;line-height:19px;color:#dbdbdb;font-weight:400;">6,286.87<span class="usd">USD</span>&nbsp;&nbsp;68.42%</div>
<div class="t " style="left:732.5px;top:130px;font-size:16px;line-height:19px;color:#dbdbdb;font-weight:400;">384</div>
<div class="t " style="left:1090.6px;top:130px;font-size:16px;line-height:19px;color:#dbdbdb;font-weight:400;">52.34%&nbsp;&nbsp;201/384</div>
<div class="t " style="left:1448.8px;top:130px;font-size:16px;line-height:19px;color:#dbdbdb;font-weight:400;">1.059</div>
<div class="t " style="left:16px;top:176px;font-size:14px;line-height:17px;color:#dbdbdb;font-weight:700;">Equity chart</div>
<div class="t g" style="left:1744px;top:220px;font-size:12px;line-height:14px;color:#b8b8b8;font-weight:400;">800.00%</div>
<div class="t g" style="left:1744px;top:279.5px;font-size:12px;line-height:14px;color:#b8b8b8;font-weight:400;">600.00%</div>
<div class="t g" style="left:1744px;top:339px;font-size:12px;line-height:14px;color:#b8b8b8;font-weight:400;">400.00%</div>
<div class="t g" style="left:1744px;top:398.5px;font-size:12px;line-height:14px;color:#b8b8b8;font-weight:400;">200.00%</div>
<div class="t g" style="left:1744px;top:458px;font-size:12px;line-height:14px;color:#b8b8b8;font-weight:400;">0.00%</div>
<div class="t g" style="left:1750px;top:384px;font-size:12px;line-height:14px;color:#ffffff;font-weight:400;">245.70%</div>
<div class="t g" style="left:16.5px;top:510px;font-size:12px;line-height:14px;color:#c6c6c6;font-weight:700;">2024</div>
<div class="t g" style="left:123.4px;top:510px;font-size:12px;line-height:14px;color:#b8b8b8;font-weight:400;">Mar</div>
<div class="t g" style="left:278.8px;top:510px;font-size:12px;line-height:14px;color:#b8b8b8;font-weight:400;">May</div>
<div class="t g" style="left:412.6px;top:510px;font-size:12px;line-height:14px;color:#b8b8b8;font-weight:400;">Jul</div>
<div class="t g" style="left:521px;top:510px;font-size:12px;line-height:14px;color:#b8b8b8;font-weight:400;">Aug</div>
<div class="t g" style="left:601.6px;top:510px;font-size:12px;line-height:14px;color:#b8b8b8;font-weight:400;">Sep</div>
<div class="t g" style="left:700.2px;top:510px;font-size:12px;line-height:14px;color:#b8b8b8;font-weight:400;">Nov</div>
<div class="t g" style="left:822.4px;top:510px;font-size:12px;line-height:14px;color:#c6c6c6;font-weight:700;">2025</div>
<div class="t g" style="left:906.2px;top:510px;font-size:12px;line-height:14px;color:#b8b8b8;font-weight:400;">Feb</div>
<div class="t g" style="left:1032.8px;top:510px;font-size:12px;line-height:14px;color:#b8b8b8;font-weight:400;">Apr</div>
<div class="t g" style="left:1157.5px;top:510px;font-size:12px;line-height:14px;color:#b8b8b8;font-weight:400;">Jun</div>
<div class="t g" style="left:1272.8px;top:510px;font-size:12px;line-height:14px;color:#b8b8b8;font-weight:400;">Aug</div>
<div class="t g" style="left:1399.6px;top:510px;font-size:12px;line-height:14px;color:#b8b8b8;font-weight:400;">Oct</div>
<div class="t g" style="left:1483.2px;top:510px;font-size:12px;line-height:14px;color:#b8b8b8;font-weight:400;">Dec</div>
<div class="t g" style="left:1583.3px;top:510px;font-size:12px;line-height:14px;color:#c6c6c6;font-weight:700;">2026</div>
<div class="t g" style="left:1680.4px;top:510px;font-size:12px;line-height:14px;color:#b8b8b8;font-weight:400;">Feb</div>
<div class="t " style="left:42px;top:545px;font-size:14px;line-height:17px;color:#dbdbdb;font-weight:400;">Buy &amp; hold</div>
<div class="t " style="left:168px;top:545px;font-size:14px;line-height:17px;color:#dbdbdb;font-weight:400;">Trades excursions</div>
<div class="t " style="left:1634.6px;top:545px;font-size:14px;line-height:17px;color:#dbdbdb;font-weight:400;">Absolute</div>
<div class="t " style="left:1711.3px;top:545px;font-size:14px;line-height:17px;color:#ffffff;font-weight:700;">Percentage</div>
<div class="t " style="left:59px;top:627px;font-size:18px;line-height:22px;color:#dbdbdb;font-weight:700;">Performance</div>
<div class="t " style="left:33px;top:677px;font-size:14px;line-height:17px;color:#dbdbdb;font-weight:700;">Profit structure</div>
<div class="t " style="left:923.4px;top:677px;font-size:14px;line-height:17px;color:#dbdbdb;font-weight:700;">Benchmarking</div>
<div class="t g" style="right:924px;top:708px;font-size:11px;line-height:13px;color:#dbdbdb;font-weight:400;word-spacing:1px;">48.00 K</div>
<div class="t g" style="right:924px;top:749px;font-size:11px;line-height:13px;color:#dbdbdb;font-weight:400;word-spacing:1px;">36.00 K</div>
<div class="t g" style="right:924px;top:789px;font-size:11px;line-height:13px;color:#dbdbdb;font-weight:400;word-spacing:1px;">24.00 K</div>
<div class="t g" style="right:924px;top:830px;font-size:11px;line-height:13px;color:#dbdbdb;font-weight:400;word-spacing:1px;">12.00 K</div>
<div class="t g" style="right:924px;top:870px;font-size:11px;line-height:13px;color:#dbdbdb;font-weight:400;word-spacing:1px;">0.00</div>
<div class="t " style="left:302px;top:897px;font-size:13px;line-height:16px;color:#9c9c9c;font-weight:400;">Total profit</div>
<div class="t " style="left:394px;top:897px;font-size:13px;line-height:16px;color:#9c9c9c;font-weight:400;">Total loss</div>
<div class="t " style="left:480px;top:897px;font-size:13px;line-height:16px;color:#9c9c9c;font-weight:400;">Commission</div>
<div class="t " style="left:583.5px;top:897px;font-size:13px;line-height:16px;color:#9c9c9c;font-weight:400;">Total P&amp;L</div>
<div class="t " style="left:1244.5px;top:897px;font-size:13px;line-height:16px;color:#9c9c9c;font-weight:400;">P&amp;L for buy &amp; hold</div>
<div class="t " style="left:1384.5px;top:897px;font-size:13px;line-height:16px;color:#9c9c9c;font-weight:400;">P&amp;L for strategy</div>
<div class="t g" style="left:1720px;top:721px;font-size:11px;line-height:13px;color:#dbdbdb;font-weight:400;word-spacing:-1px;">1.00 K%</div>
<div class="t g" style="left:1720px;top:750px;font-size:11px;line-height:13px;color:#dbdbdb;font-weight:400;">750.00%</div>
<div class="t g" style="left:1720px;top:779px;font-size:11px;line-height:13px;color:#dbdbdb;font-weight:400;">500.00%</div>
<div class="t g" style="left:1720px;top:809px;font-size:11px;line-height:13px;color:#dbdbdb;font-weight:400;">250.00%</div>
<div class="t g" style="left:1720px;top:838px;font-size:11px;line-height:13px;color:#dbdbdb;font-weight:400;">0.00%</div>
<div class="t g" style="left:1720px;top:867px;font-size:11px;line-height:13px;color:#dbdbdb;font-weight:400;">−250.00%</div>
<div class="t g" style="left:1136px;top:798px;font-size:13px;line-height:16px;color:#ffffff;font-weight:400;">Max</div>
<div class="t g" style="right:572px;top:798px;font-size:13px;line-height:16px;color:#ffffff;font-weight:400;">231.44%</div>
<div class="t g" style="left:1136px;top:816px;font-size:13px;line-height:16px;color:#ffffff;font-weight:400;">Current</div>
<div class="t g" style="right:572px;top:816px;font-size:13px;line-height:16px;color:#ffffff;font-weight:400;">165.45%</div>
<div class="t g" style="left:1136px;top:836px;font-size:13px;line-height:16px;color:#ffffff;font-weight:400;">Min</div>
<div class="t g" style="right:572px;top:836px;font-size:13px;line-height:16px;color:#ffffff;font-weight:400;">−5.22%</div>
<div class="t g" style="left:1388.5px;top:739px;font-size:13px;line-height:16px;color:#ffffff;font-weight:400;">Max</div>
<div class="t g" style="right:320.0px;top:739px;font-size:13px;line-height:16px;color:#ffffff;font-weight:400;">818.81%</div>
<div class="t g" style="left:1388.5px;top:807px;font-size:13px;line-height:16px;color:#ffffff;font-weight:400;">Current</div>
<div class="t g" style="right:320.0px;top:807px;font-size:13px;line-height:16px;color:#ffffff;font-weight:400;">245.70%</div>
<div class="t g" style="left:1388.5px;top:837px;font-size:13px;line-height:16px;color:#ffffff;font-weight:400;">Min</div>
<div class="t g" style="right:320.0px;top:837px;font-size:13px;line-height:16px;color:#ffffff;font-weight:400;">−11.33%</div>
<div class="t " style="left:33px;top:942px;font-size:14px;line-height:17px;color:#dbdbdb;font-weight:700;">Returns</div>
<div class="t " style="left:33px;top:982px;font-size:14px;line-height:17px;color:#8c8c8c;font-weight:400;">Metric</div>
<div class="t " style="right:1098px;top:982px;font-size:14px;line-height:17px;color:#8c8c8c;font-weight:400;">All</div>
<div class="t " style="right:741.5px;top:982px;font-size:14px;line-height:17px;color:#8c8c8c;font-weight:400;">Long</div>
<div class="t " style="right:385px;top:982px;font-size:14px;line-height:17px;color:#8c8c8c;font-weight:400;">Short</div>
<div class="t " style="left:33px;top:1032px;font-size:14px;line-height:17px;color:#dbdbdb;font-weight:400;">Initial capital</div>
<div class="t " style="right:1097.7px;top:1030px;font-size:14px;line-height:17px;color:#dbdbdb;font-weight:400;">1,000.00<span style="font-size:10px;margin-left:3.2px">USD</span></div>
</body></html>
